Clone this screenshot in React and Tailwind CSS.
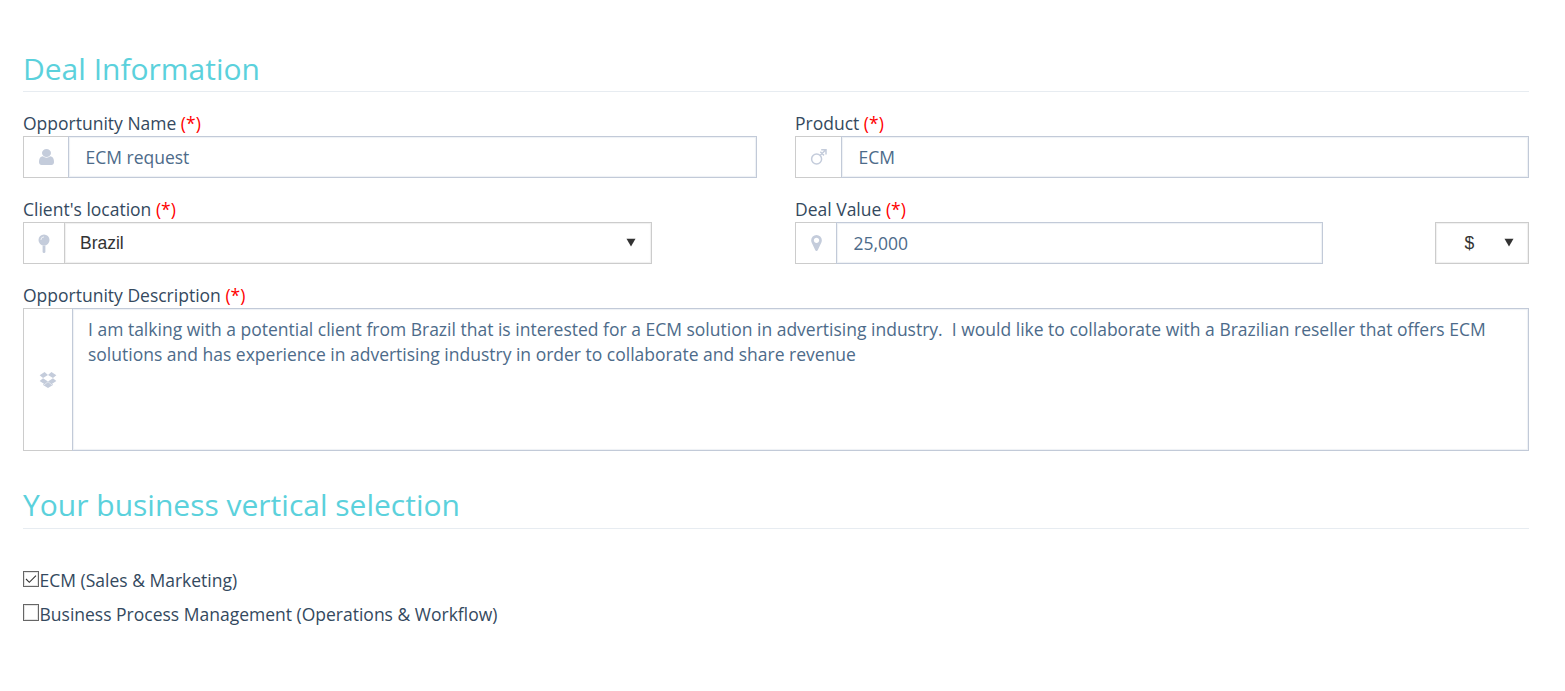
import React from "react";

const UserIcon = () => (
  <svg viewBox="0 128 1280 1536" className="mb-px h-[16px] w-[15px]" preserveAspectRatio="none" fill="currentColor">
    <path d="M1280 1399q0 109-62.5 187t-150.5 78h-854q-88 0-150.5-78t-62.5-187q0-85 8.5-160.5t31.5-152 58.5-131 94-89 134.5-34.5q131 128 313 128t313-128q76 0 134.5 34.5t94 89 58.5 131 31.5 152 8.5 160.5zm-256-887q0 159-112.5 271.5t-271.5 112.5-271.5-112.5-112.5-271.5 112.5-271.5 271.5-112.5 271.5 112.5 112.5 271.5z" />
  </svg>
);

const MarsStrokeIcon = () => (
  <svg viewBox="0 0 18 18" className="mb-px h-[18px] w-[18px]" fill="none" stroke="currentColor" strokeWidth="1.5">
    <circle cx="6.6" cy="11" r="5" />
    <path d="M10.3 7.3L15.8 1.8M11.2 1.7H16V6.4M10.3 3.7L14 7.4" />
  </svg>
);

const PinIcon = () => (
  <svg viewBox="0 0 12 20" className="mt-[2px] h-[20px] w-[12px]" fill="currentColor">
    <circle cx="6" cy="6" r="5.5" />
    <path d="M4.6 11.5h2.8v6.3q0 1.2-1.4 1.2t-1.4-1.2z" />
    <path d="M2.9 6Q2.9 2.9 6 2.9" fill="none" stroke="#fff" strokeWidth="0.7" />
  </svg>
);

const MarkerIcon = () => (
  <svg viewBox="0 128 1024 1536" className="h-[16px] w-[11px]" fill="currentColor">
    <path d="M768 640q0-106-75-181t-181-75-181 75-75 181 75 181 181 75 181-75 75-181zm256 0q0 109-33 179l-364 774q-16 33-47.5 52t-67.5 19-67.5-19-46.5-52l-365-774q-33-70-33-179 0-212 150-362t362-150 362 150 150 362z" />
  </svg>
);

const DropboxIcon = () => (
  <svg viewBox="0 0 1792 1792" className="mb-[2px] mr-px h-[18px] w-[18px]" fill="currentColor">
    <path d="M402 829l494 305-342 285-490-319zm986 555v108l-490 293v1l-1-1-1 1v-1l-489-293v-108l147 96 342-284v-2l1 1 1-1v2l343 284zm-834-1175l342 285-494 304-338-270zm836 620l338 271-489 319-343-285zm-151-620l489 319-338 270-494-304z" />
  </svg>
);

const Arrow = () => (
  <svg viewBox="0 0 10 9" className="mb-px h-[9px] w-[10px]" fill="#333">
    <path d="M0.5 0.8H9.5L5 8.6z" />
  </svg>
);

const Label = ({ children }) => (
  <div className="h-[25px] whitespace-pre text-[17.5px] leading-[25px] text-[#34495e]">
    {children} <span className="text-[#ff0000]">(*)</span>
  </div>
);

const Addon = ({ className, children }) => (
  <div className={"flex shrink-0 items-center justify-center border border-r-0 border-[#ccc] text-[#c4ccdb] " + className}>{children}</div>
);

const Field = ({ className = "", children }) => (
  <div className={"flex flex-1 border border-[#c2cad8] text-[17.5px] text-[#4d6b8a] shadow-[inset_0_0_1px_1px_#eef1f5] " + className}>
    {children}
  </div>
);

const Heading = ({ className, children }) => (
  <h3 className={"border-b border-[#e7ecf1] text-[30px] leading-[44px] text-[#5bd1dc] " + className}>{children}</h3>
);

const CheckRow = ({ checked, children }) => (
  <label className="flex h-[34px] items-center text-[17.5px] text-[#34495e]">
    {checked ? (
      <svg viewBox="0 0 16 16" className="mb-[2px] h-[16px] w-[16px] shrink-0" fill="none">
        <rect x="0.5" y="0.5" width="15" height="15" fill="#fff" stroke="#666" />
        <rect x="1.5" y="1.5" width="13" height="13" stroke="#e4e4e4" />
        <path d="M3 8L6.3 11.3L13 4.6" stroke="#333" strokeWidth="1.1" />
      </svg>
    ) : (
      <svg viewBox="0 0 16 17" className="mb-[3px] h-[17px] w-[16px] shrink-0" fill="none">
        <rect x="0.5" y="0.5" width="15" height="16" fill="#fff" stroke="#666" />
        <rect x="1.5" y="1.5" width="13" height="14" stroke="#e4e4e4" />
      </svg>
    )}
    <span className="whitespace-nowrap pl-[0.5px]">{children}</span>
  </label>
);

export default function App() {
  return (
    <main className="h-[691px] w-[1565px] bg-white pl-[23px] pr-[36px] pt-[47px] font-['Open_Sans',sans-serif]">
      <Heading className="h-[45px]">Deal Information</Heading>

      <div className="mt-[19px] grid grid-cols-2 gap-x-[38px]">
        <div>
          <Label>Opportunity Name</Label>
          <div className="flex h-[42px]">
            <Addon className="w-[45px]"><UserIcon /></Addon>
            <Field className="items-center pl-[16.5px]">ECM request</Field>
          </div>
        </div>
        <div>
          <Label>Product</Label>
          <div className="flex h-[42px]">
            <Addon className="w-[46px]"><MarsStrokeIcon /></Addon>
            <Field className="items-center pl-[16.5px]">ECM</Field>
          </div>
        </div>
      </div>

      <div className="mt-[19px] grid grid-cols-2 gap-x-[38px]">
        <div>
          <Label>Client's location</Label>
          <div className="flex h-[42px] w-[629px]">
            <Addon className="w-[41px]"><PinIcon /></Addon>
            <div className="flex flex-1 items-center justify-between border border-[#ccc] pl-[15px] pr-[15px] font-['Liberation_Sans',sans-serif] text-[17.5px] text-[#333] shadow-[inset_0_0_1px_1px_#f0f0f0]">
              <span>Brazil</span>
              <Arrow />
            </div>
          </div>
        </div>
        <div>
          <Label>Deal Value</Label>
          <div className="flex h-[42px] justify-between">
            <div className="flex w-[528px]">
              <Addon className="w-[41px]"><MarkerIcon /></Addon>
              <Field className="items-center pl-[16.5px]">25,000</Field>
            </div>
            <div className="flex w-[94px] items-center justify-between border border-[#ccc] pl-[28.5px] pr-[14px] font-['Liberation_Sans',sans-serif] text-[17.5px] text-[#333] shadow-[inset_0_0_1px_1px_#f0f0f0]">
              <span>$</span>
              <Arrow />
            </div>
          </div>
        </div>
      </div>

      <div className="mt-[19px]">
        <Label>Opportunity Description</Label>
        <div className="flex h-[143px]">
          <Addon className="w-[49px]"><DropboxIcon /></Addon>
          <Field className="items-start pl-[15px] pt-[8px]">
            <p className="whitespace-pre leading-[25px]">
              {"I am talking with a potential client from Brazil that is interested for a ECM solution in advertising industry.  I would like to collaborate with a Brazilian reseller that offers ECM\nsolutions and has experience in advertising industry in order to collaborate and share revenue"}
            </p>
          </Field>
        </div>
      </div>

      <Heading className="mt-[32px] h-[46px]">Your business vertical selection</Heading>

      <div className="mt-[34px]">
        <CheckRow checked>ECM (Sales &amp; Marketing)</CheckRow>
        <CheckRow>Business Process Management (Operations &amp; Workflow)</CheckRow>
      </div>
    </main>
  );
}
